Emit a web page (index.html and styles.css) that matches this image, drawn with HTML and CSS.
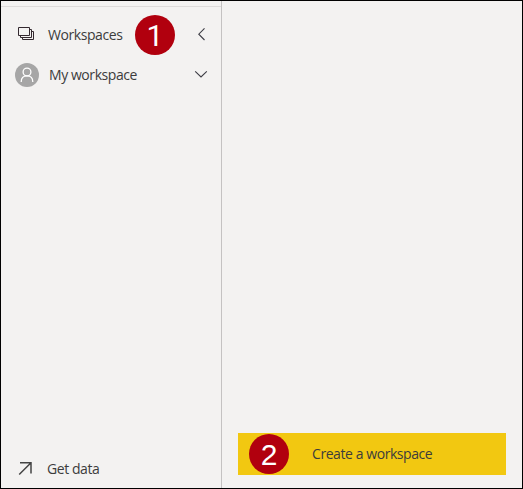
FILE: index.html
```html
<!DOCTYPE html>
<html lang="en">
<head>
<meta charset="utf-8">
<title>Workspaces</title>
<link rel="stylesheet" href="styles.css">
</head>
<body>
<div class="window">
  <nav class="sidebar">
    <div class="row workspaces">
      <svg class="stack" width="18" height="16" viewBox="0 0 18 16" fill="none" stroke="#33292f"><path d="M1.500 .5h11v8h-11zM12.500 2.500h2v8h-11v-2M14.500 4.500h2v8h-11v-2"/></svg>
      <span class="label label-workspaces">Workspaces</span>
      <span class="badge badge-one">1</span>
      <svg class="chevron" width="14" height="14" viewBox="0 0 14 14" fill="none" stroke="#3c3c44" stroke-width="1.1"><path d="M10.500 .4 4.800 6.200l5.700 5.800"/></svg>
    </div>
    <div class="row mine">
      <svg class="avatar" width="24" height="24" viewBox="0 0 24 24"><circle cx="12" cy="12" r="12" fill="#a6a6a6"/><g fill="none" stroke="#fff" stroke-width="1.3"><circle cx="12" cy="9" r="3.900"/><path d="M6.200 19c0-3.900 2.500-6.100 5.800-6.100s5.800 2.200 5.800 6.100"/></g></svg>
      <span class="label label-mine">My workspace</span>
      <svg class="chevron" width="14" height="14" viewBox="0 0 14 14" fill="none" stroke="#3c3c44" stroke-width="1.1"><path d="m1.200 3.300 5.800 5.700 5.800-5.700"/></svg>
    </div>
    <div class="row data">
      <svg class="arrow" width="15" height="15" viewBox="0 0 15 15" fill="none" stroke="#444" stroke-width="1.500"><path d="M2 1.800h11v10.700M13 1.800 1.200 13.500"/></svg>
      <span class="label label-data">Get data</span>
    </div>
  </nav>
  <main class="panel">
    <button class="create">
      <span class="badge">2</span>
      <span class="label label-create">Create a workspace</span>
    </button>
  </main>
</div>
</body>
</html>
```
FILE: styles.css
```css
* { box-sizing: border-box; }
body { margin: 0; font-family: "Open Sans", "Noto Sans", sans-serif; font-size: 14px; color: #3c3c3c; }
.window { display: flex; width: 523px; height: 489px; border: 1px solid #000; background: #f3f2f1; }
.sidebar { display: flex; flex-direction: column; width: 220px; margin-top: 5px; border-top: 1px solid #dddbda; box-shadow: 0 -5px #f3f2f1, 1px -5px #c4c2c2, 1px 0 #c4c2c2; }
.row { display: flex; align-items: center; height: 40px; flex: none; padding-right: 13px; }
.row svg { flex: none; }
.label { line-height: 20px; white-space: nowrap; letter-spacing: -0.43px; }
.workspaces { margin-top: 8px; padding-left: 16px; }
.label-workspaces { width: 74px; margin-left: 13px; }
.workspaces .badge { margin-left: 13px; }
.mine { padding-left: 14px; }
.label-mine { margin-left: 10px; }
.chevron { margin-left: auto; }
.data { margin-top: auto; padding-left: 17px; }
.label-data { margin-left: 14px; padding-top: 2px; }
.badge { flex: none; width: 40px; height: 40px; border-radius: 50%; background: #b1000e; color: #fff; font: 30px/41px "Liberation Sans", Arial, sans-serif; text-align: center; }
.badge-one { font-family: Roboto, "Liberation Sans", sans-serif; }
.panel { display: flex; flex: 1; align-items: flex-end; padding: 0 16px 13px 17px; }
.create { display: flex; align-items: center; width: 268px; height: 42px; padding: 0 0 0 11px; border: 0; background: #f2c811; color: #3c3c3c; font: inherit; }
.label-create { margin-left: 23px; }
```
